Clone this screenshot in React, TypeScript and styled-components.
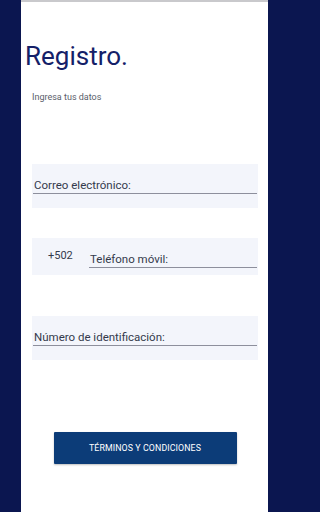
import React from "react";
import styled, { createGlobalStyle } from "styled-components";

const GlobalStyle = createGlobalStyle`
    html, body {
        margin: 0;
        padding: 0;
        background: #0b1650;
    }
    * {
        box-sizing: border-box;
    }
`;

const Screen = styled.div`
    display: flex;
    width: 288px;
    height: 512px;
    background: #0b1650;
    font-family: Roboto, "Liberation Sans", sans-serif;
`;

const Side = styled.div<{ w: number }>`
    width: ${({ w }) => w}px;
    flex-shrink: 0;
    background: #0b1650;
`;

const Panel = styled.div`
    flex: 1;
    display: flex;
    flex-direction: column;
    background: #ffffff;
    border-top: 2px solid #c9c9cc;
    padding: 0 10px 0 11px;
`;

const Title = styled.h1`
    margin: 38px 0 0 -7px;
    font-size: 26px;
    line-height: 32px;
    font-weight: 400;
    color: #142068;
`;

const Subtitle = styled.p`
    margin: 19px 0 0 0;
    font-size: 9px;
    line-height: 12px;
    color: #5a5e6a;
`;

const Field = styled.div<{ h: number; mt: number }>`
    display: flex;
    align-items: flex-end;
    height: ${({ h }) => h}px;
    margin-top: ${({ mt }) => mt}px;
    background: #f3f5fb;
    padding: 0 1px;
`;

const Input = styled.div<{ pb: number }>`
    flex: 1;
    border-bottom: 1px solid #8d8f9c;
    margin-bottom: ${({ pb }) => pb}px;
    padding: 0 0 1px 1px;
    font-size: 11.5px;
    line-height: 14px;
    color: #343a4c;
`;

const Prefix = styled.span`
    width: 56px;
    flex-shrink: 0;
    align-self: center;
    padding-left: 15px;
    margin-top: -2px;
    font-size: 11px;
    color: #343a4c;
`;

const ButtonRow = styled.div`
    display: flex;
    justify-content: center;
    margin-top: 72px;
`;

const TermsButton = styled.button`
    width: 183px;
    height: 32px;
    border: none;
    border-radius: 1px;
    background: #0c3c78;
    color: #ffffff;
    font-family: Roboto, "Liberation Sans", sans-serif;
    font-size: 8.8px;
    font-weight: 400;
    letter-spacing: 0.1px;
    box-shadow: 0 1px 2px rgba(0, 0, 0, 0.25);
`;

export default function App() {
    return (
        <>
            <GlobalStyle />
            <Screen>
                <Side w={21} />
                <Panel>
                    <Title>Registro.</Title>
                    <Subtitle>Ingresa tus datos</Subtitle>
                    <Field h={44} mt={61}>
                        <Input pb={14}>Correo electrónico:</Input>
                    </Field>
                    <Field h={37} mt={30}>
                        <Prefix>+502</Prefix>
                        <Input pb={7}>Teléfono móvil:</Input>
                    </Field>
                    <Field h={44} mt={41}>
                        <Input pb={14}>Número de identificación:</Input>
                    </Field>
                    <ButtonRow>
                        <TermsButton>TÉRMINOS Y CONDICIONES</TermsButton>
                    </ButtonRow>
                </Panel>
                <Side w={20} />
            </Screen>
        </>
    );
}
